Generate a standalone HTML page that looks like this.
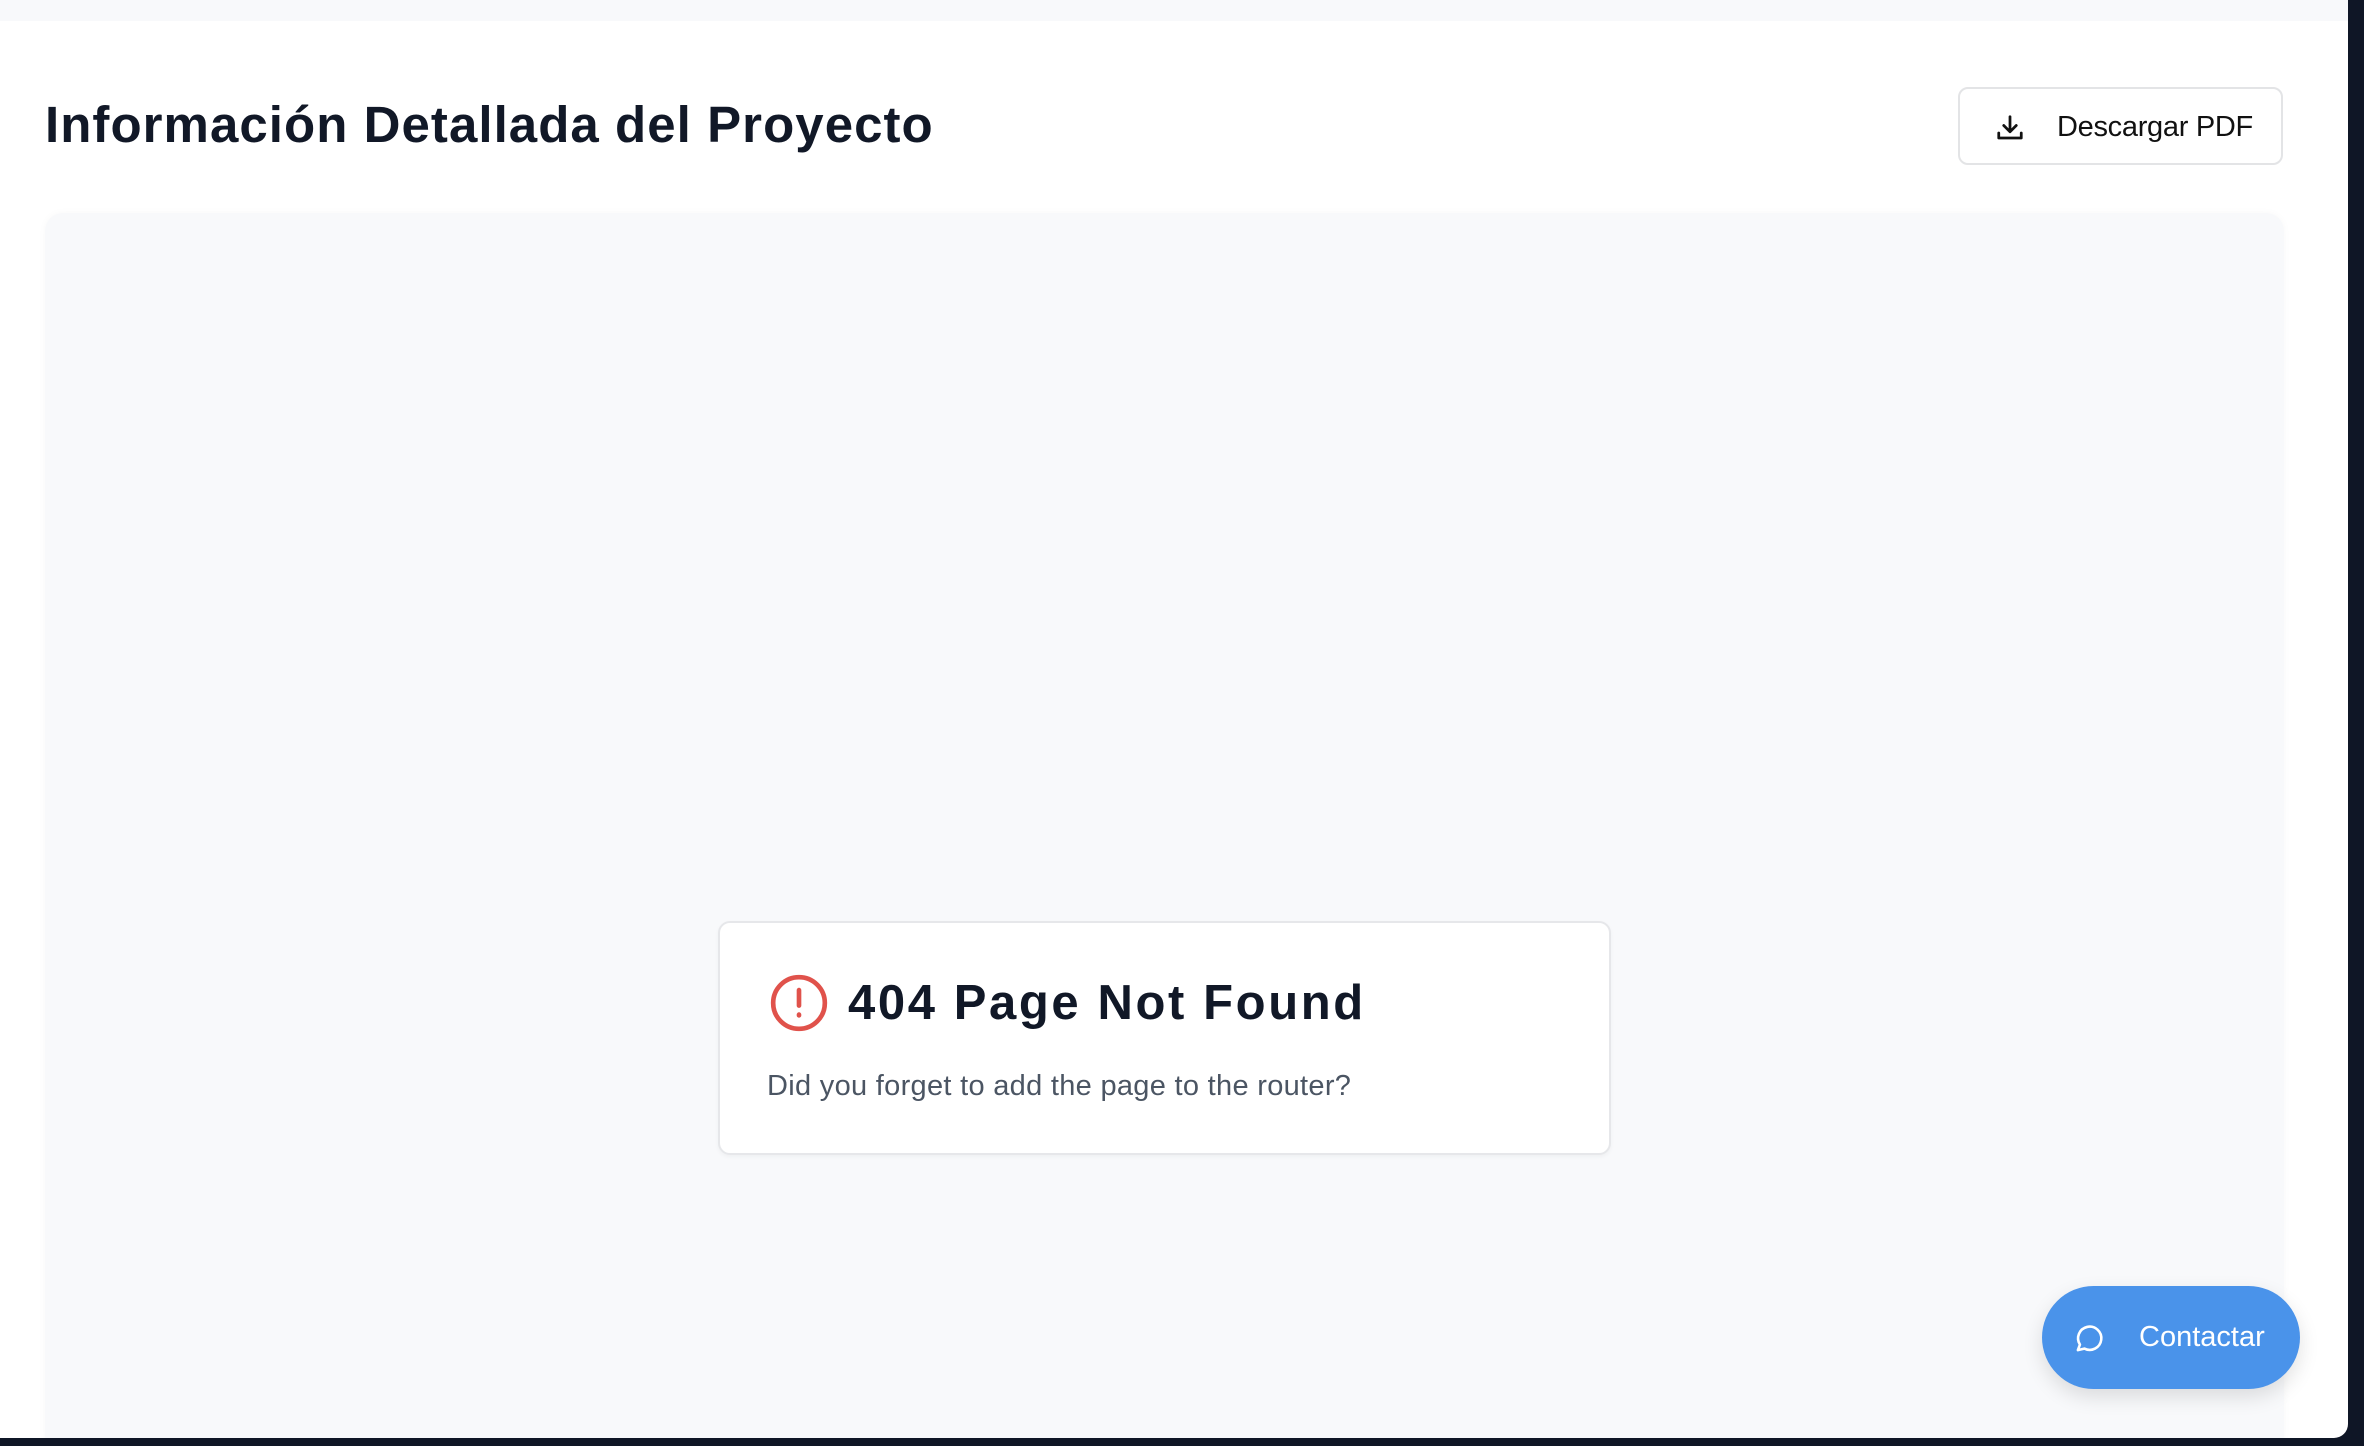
<!DOCTYPE html>
<html><head><meta charset="utf-8"><style>
*{margin:0;padding:0;box-sizing:border-box}
html,body{width:2364px;height:1446px;overflow:hidden;background:#0f1626;font-family:"Liberation Sans",sans-serif}
.panel{position:absolute;left:0;top:0;width:2348px;height:1438px;background:#fff;border-bottom-right-radius:14px;overflow:hidden}
.strip{position:absolute;left:0;top:0;width:100%;height:21px;background:#f8f9fb}
h1{position:absolute;left:45px;top:95px;font-size:51px;font-weight:700;color:#111827;letter-spacing:1.05px;white-space:nowrap}
.btn{position:absolute;left:1958px;top:87px;width:325px;height:78px;border:2px solid #e3e4e6;border-radius:10px}
.btn svg{position:absolute;left:35px;top:24px}
.btn span{position:absolute;left:97px;top:22px;font-size:29px;color:#111;white-space:nowrap;letter-spacing:-0.3px}
.card{position:absolute;left:45px;top:213px;width:2239px;height:1240px;background:#f8f9fb;border-radius:18px;box-shadow:0 0 8px rgba(0,0,0,0.03)}
.nf{position:absolute;left:718px;top:921px;width:893px;height:234px;background:#fff;border:2px solid #e6e7ea;border-radius:12px;box-shadow:0 2px 4px rgba(0,0,0,0.04)}
.nf svg{position:absolute;left:48px;top:49px}
.nf h2{position:absolute;left:128px;top:52px;font-size:49px;font-weight:700;color:#111827;white-space:nowrap;letter-spacing:2.6px}
.nf p{position:absolute;left:47px;top:147px;font-size:29px;color:#4b5563;white-space:nowrap;letter-spacing:0.3px}
.ct{position:absolute;left:2042px;top:1286px;width:258px;height:103px;border-radius:52px;background:#4a93ea;box-shadow:0 8px 20px rgba(0,0,0,0.12)}
.ct svg{position:absolute;left:32px;top:37px}
.ct span{position:absolute;left:97px;top:35px;font-size:29px;color:#fff;white-space:nowrap}
</style></head><body>
<div class="panel">
<div class="strip"></div>
<h1>Información Detallada del Proyecto</h1>
<div class="btn"><svg width="30" height="30" viewBox="0 0 24 24" fill="none" stroke="#111" stroke-width="2.2" stroke-linecap="round" stroke-linejoin="round"><path d="M12 3v12M7 10l5 5 5-5M3 16v4h18v-4"/></svg><span>Descargar PDF</span></div>
<div class="card"></div>
<div class="nf"><svg width="62" height="62" viewBox="0 0 24 24" fill="none" stroke="#e0524b" stroke-width="1.8" stroke-linecap="round"><circle cx="12" cy="12" r="10"/><path d="M12 7v6M12 16.5v.3"/></svg><h2>404 Page Not Found</h2><p>Did you forget to add the page to the router?</p></div>
<div class="ct"><svg width="31" height="31" viewBox="0 0 24 24" fill="none" stroke="#fff" stroke-width="2" stroke-linejoin="round"><path d="M3 21l1.6-4.3A9 9 0 1 1 8 19.8z"/></svg><span>Contactar</span></div>
</div>
</body></html>
